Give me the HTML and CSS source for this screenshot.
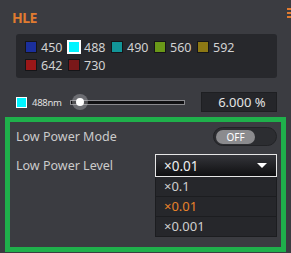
FILE: index.html
```html
<!DOCTYPE html>
<html lang="en">
<head>
    <meta charset="UTF-8">
    <meta name="viewport" content="width=device-width, initial-scale=1.0">
    <title>HLE</title>
    <link rel="stylesheet" href="styles.css">
</head>
<body>
    <div class="header">
        <div class="title">HLE</div>
        <svg class="corner-icon" width="8" height="10" viewBox="0 0 8 10">
            <rect x="0" y="0" width="8" height="2" fill="#e07b30"/>
            <rect x="0" y="4" width="8" height="2" fill="#e07b30"/>
            <rect x="0" y="8" width="8" height="2" fill="#e07b30"/>
        </svg>
    </div>

    <div class="lines">
        <div class="line"><span class="swatch" style="background:#1b2f9c"></span>450</div>
        <div class="line"><span class="swatch selected" style="background:#00f4ff"></span>488</div>
        <div class="line"><span class="swatch" style="background:#129598"></span>490</div>
        <div class="line"><span class="swatch" style="background:#6a9818"></span>560</div>
        <div class="line"><span class="swatch" style="background:#8c7814"></span>592</div>
        <div class="line"><span class="swatch" style="background:#9a1718"></span>642</div>
        <div class="line"><span class="swatch" style="background:#7a1819"></span>730</div>
    </div>

    <div class="power-row">
        <span class="small-swatch"></span>
        <span class="nm">488nm</span>
        <div class="slider">
            <div class="track"></div>
            <div class="thumb"></div>
        </div>
        <div class="value">6.000 %</div>
    </div>

    <div class="low-power">
        <div class="lp-row">
            <span class="lp-label">Low Power Mode</span>
            <div class="toggle"><span class="toggle-pill">OFF</span></div>
        </div>
        <div class="lp-row level">
            <span class="lp-label">Low Power Level</span>
            <div class="select-wrap">
                <div class="select">
                    <span>×0.01</span>
                    <span class="arrow"></span>
                </div>
                <div class="menu">
                    <div class="menu-item">×0.1</div>
                    <div class="menu-item active">×0.01</div>
                    <div class="menu-item">×0.001</div>
                </div>
            </div>
        </div>
    </div>
</body>
</html>
```

FILE: styles.css
```css
body {
    margin: 0;
    width: 291px;
    height: 253px;
    overflow: hidden;
    background: #3b3c41;
    font-family: "Noto Sans", sans-serif;
    color: #d0d0d0;
}

.header {
    display: flex;
    justify-content: space-between;
    align-items: flex-start;
    padding-top: 10px;
    padding-left: 12px;
    height: 16px;
}

.title {
    color: #e07b30;
    font-weight: bold;
    font-size: 14px;
    line-height: 16px;
    letter-spacing: -0.5px;
}

.corner-icon {
    margin-top: -2px;
    margin-right: -4px;
}

.lines {
    display: flex;
    flex-wrap: wrap;
    margin: 8px 14px 0 16px;
    padding: 4px 9px;
    background: #27282c;
    border-radius: 3px;
}

.line {
    width: 43px;
    height: 18px;
    display: flex;
    align-items: center;
    font-size: 12.5px;
    color: #d2d2d2;
}

.swatch {
    width: 12px;
    height: 12px;
    box-sizing: border-box;
    border: 1px solid #151518;
    margin-right: 4px;
}

.swatch.selected {
    border: 1px solid #fff;
    box-shadow: 0 0 0 1px #fff;
}

.power-row {
    display: flex;
    align-items: center;
    margin-top: 14px;
    padding-left: 16px;
    height: 20px;
}

.small-swatch {
    width: 11px;
    height: 11px;
    box-sizing: border-box;
    background: #00f4ff;
    border: 1px solid #fff;
    margin-right: 5px;
}

.nm {
    font-size: 9.5px;
    color: #e0e0e0;
    letter-spacing: -0.3px;
    margin-right: 8px;
}

.slider {
    position: relative;
    width: 115px;
    height: 16px;
    display: flex;
    align-items: center;
}

.track {
    width: 100%;
    height: 5px;
    box-sizing: border-box;
    background: #111113;
    border: 1px solid #8a8a8e;
}

.thumb {
    position: absolute;
    left: 2px;
    top: 0;
    width: 8px;
    height: 8px;
    margin: 4px;
    border-radius: 50%;
    background: #fff;
    box-shadow: 0 0 0 4px rgba(200, 200, 205, 0.35);
}

.value {
    margin-left: 16px;
    width: 76px;
    height: 20px;
    box-sizing: border-box;
    background: #25262a;
    border: 1px solid #1e1f22;
    text-align: right;
    padding-right: 10px;
    font-size: 13px;
    line-height: 18px;
    color: #e4e4e4;
}

.low-power {
    margin: 5px 0 0 5px;
    width: 281px;
    box-sizing: border-box;
    border: 5px solid #1fb04b;
    padding: 5px 4px 10px 6px;
}

.lp-row {
    display: flex;
    justify-content: space-between;
    align-items: center;
    height: 19px;
}

.lp-row.level {
    margin-top: 8px;
    align-items: flex-start;
    height: auto;
}

.lp-label {
    font-size: 12.5px;
    color: #cbcbcb;
}

.level .lp-label {
    line-height: 23px;
}

.toggle {
    width: 64px;
    height: 19px;
    box-sizing: border-box;
    border-radius: 10px;
    background: #2c2d31;
    border: 1px solid #222326;
    display: flex;
    align-items: center;
    padding-left: 2px;
}

.toggle-pill {
    width: 39px;
    height: 14px;
    border-radius: 7px;
    background: #8b8b8e;
    color: #fff;
    font-size: 10px;
    line-height: 14px;
    text-align: center;
}

.select-wrap {
    width: 122px;
}

.select {
    height: 23px;
    box-sizing: border-box;
    border: 1px solid #e6e6e6;
    background: linear-gradient(to bottom, #34353a, #0f0f11);
    display: flex;
    justify-content: space-between;
    align-items: center;
    padding: 0 9px 0 8px;
    font-size: 13.5px;
    color: #f0f0f0;
}

.arrow {
    width: 0;
    height: 0;
    border-left: 5px solid transparent;
    border-right: 5px solid transparent;
    border-top: 5px solid #fff;
}

.menu {
    background: #26272b;
    border: 1px solid #1c1d20;
    border-top: none;
}

.menu-item {
    height: 19px;
    line-height: 19px;
    padding-left: 8px;
    font-size: 13px;
    color: #cfcfcf;
    border-bottom: 1px solid #1c1d20;
}

.menu-item:last-child {
    border-bottom: none;
}

.menu-item.active {
    color: #e8822a;
}
```
